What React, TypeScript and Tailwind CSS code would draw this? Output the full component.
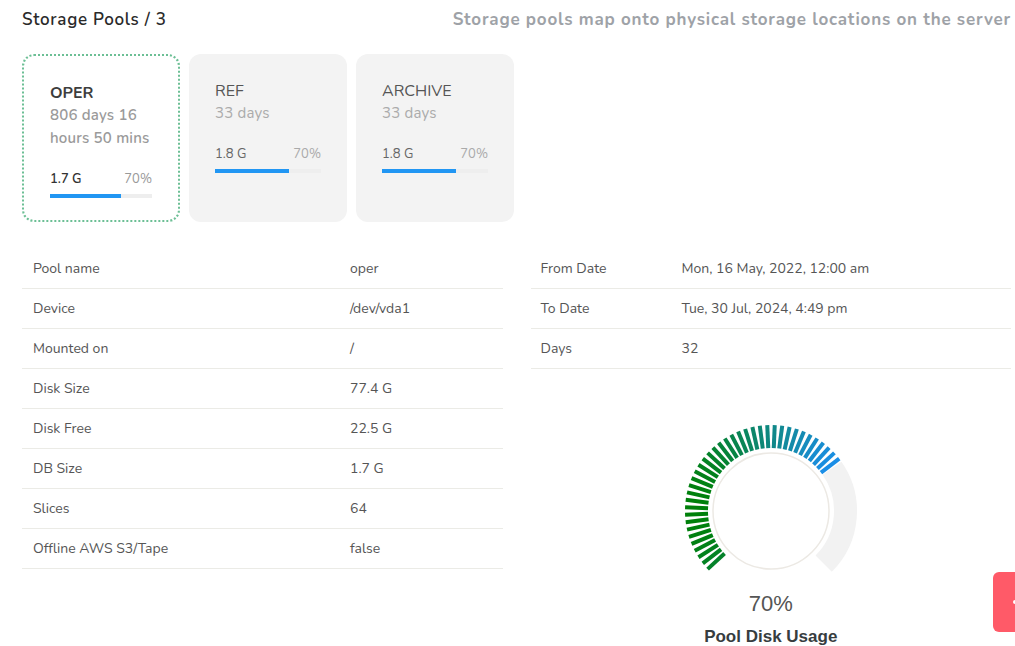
import React from 'react';

const FONT = "font-['Nunito','Lato','Noto_Sans',sans-serif]";

const pools = [
  { name: 'OPER', age: '806 days 16 hours 50 mins', size: '1.7 G', pct: 70, active: true },
  { name: 'REF', age: '33 days', size: '1.8 G', pct: 70, active: false },
  { name: 'ARCHIVE', age: '33 days', size: '1.8 G', pct: 70, active: false },
];

const details = [
  ['Pool name', 'oper'],
  ['Device', '/dev/vda1'],
  ['Mounted on', '/'],
  ['Disk Size', '77.4 G'],
  ['Disk Free', '22.5 G'],
  ['DB Size', '1.7 G'],
  ['Slices', '64'],
  ['Offline AWS S3/Tape', 'false'],
];

const dates = [
  ['From Date', 'Mon, 16 May, 2022, 12:00 am'],
  ['To Date', 'Tue, 30 Jul, 2024, 4:49 pm'],
  ['Days', '32'],
];

function PoolCard({ pool }: { pool: (typeof pools)[number] }) {
  return (
    <div
      className={`w-[158px] h-[168px] rounded-xl p-[26px] ${
        pool.active ? 'border-2 border-dotted border-[#6cbf95] bg-white' : 'bg-[#f3f3f3]'
      }`}
    >
      <div className={`text-[16px] leading-[22px] ${pool.active ? 'font-bold text-[#3d3d3d]' : 'text-[#555]'}`}>
        {pool.name}
      </div>
      <div
        className={`text-[15px] leading-[23px] tracking-[0.2px] ${
          pool.active ? 'font-semibold text-[#9a9a9a]' : 'text-[#ababab]'
        }`}
      >
        {pool.age}
      </div>
      <div className="mt-[20px] flex justify-between text-[13px] leading-[18px]">
        <span className={pool.active ? 'font-semibold text-[#333]' : 'text-[#666]'}>{pool.size}</span>
        <span className={pool.active ? 'text-[#999]' : 'text-[#aaa]'}>{pool.pct}%</span>
      </div>
      <div className="mt-[6px] h-[4px] bg-[#eeeeee]">
        <div className="h-full bg-[#2196f3]" style={{ width: `${pool.pct}%` }} />
      </div>
    </div>
  );
}

function InfoTable({ rows, labelWidth, padX }: { rows: string[][]; labelWidth: string; padX: string }) {
  return (
    <div>
      {rows.map(([k, v]) => (
        <div key={k} className={`flex h-10 items-center border-b border-[#ebebe6] ${padX} text-[14px] text-[#555]`}>
          <div className={labelWidth}>{k}</div>
          <div>{v}</div>
        </div>
      ))}
    </div>
  );
}

function Gauge({ pct }: { pct: number }) {
  const cx = 100;
  const cy = 100;
  const start = -135;
  const end = start + (270 * pct) / 100;
  const step = 5;
  const ticks: React.ReactNode[] = [];
  const mix = (a: number, b: number, t: number) => Math.round(a + (b - a) * t);
  for (let a = start + 2.5; a <= end; a += step) {
    const rad = (a * Math.PI) / 180;
    const s = Math.sin(rad);
    const c = -Math.cos(rad);
    const t = (s + 1) / 2;
    const col = `rgb(${mix(0, 30, t)},${mix(128, 144, t)},${mix(10, 255, t)})`;
    ticks.push(
      <line
        key={a}
        x1={cx + 63 * s}
        y1={cy + 63 * c}
        x2={cx + 86 * s}
        y2={cy + 86 * c}
        stroke={col}
        strokeWidth={4}
      />
    );
  }
  const pt = (deg: number, r: number) => {
    const rad = (deg * Math.PI) / 180;
    return `${cx + r * Math.sin(rad)} ${cy - r * Math.cos(rad)}`;
  };
  const trackR = 74.5;
  return (
    <svg width="200" height="180" viewBox="0 0 200 180">
      <path
        d={`M ${pt(end + 1, trackR)} A ${trackR} ${trackR} 0 0 1 ${pt(135, trackR)}`}
        fill="none"
        stroke="#f2f2f2"
        strokeWidth={23}
      />
      {ticks}
      <circle cx={cx} cy={cy} r={58} fill="#fff" stroke="#ece9e4" strokeWidth={1.5} />
    </svg>
  );
}

export default function App() {
  return (
    <div className={`relative h-screen overflow-hidden bg-white pl-[22px] pr-[4px] pt-[8px] ${FONT}`}>
      <div className="flex items-center justify-between h-6">
        <h1 className="text-[17px] font-semibold tracking-[0.7px] text-[#2a2a2a]">Storage Pools / 3</h1>
        <p className="text-[17px] font-bold tracking-[0.8px] text-[#9ea2a7]">
          Storage pools map onto physical storage locations on the server
        </p>
      </div>

      <div className="mt-[22px] flex gap-[9px]">
        {pools.map(p => (
          <PoolCard key={p.name} pool={p} />
        ))}
      </div>

      <div className="mt-[27px] grid grid-cols-2 gap-7">
        <InfoTable rows={details} labelWidth="w-[317px]" padX="px-[11px]" />
        <div className="flex flex-col">
          <InfoTable rows={dates} labelWidth="w-[141px]" padX="px-[10px]" />
          <div className="mt-[42px] flex flex-col items-center">
            <Gauge pct={70} />
            <div className="font-['Liberation_Sans',Arial,sans-serif] text-[22px] leading-[26px] text-[#555]">70%</div>
            <div className="mt-[9px] font-['Liberation_Sans',Arial,sans-serif] text-[17px] font-bold leading-[22px] text-[#373d3f]">
              Pool Disk Usage
            </div>
          </div>
        </div>
      </div>

      <div className="fixed left-[993px] top-[572px] flex h-[60px] w-[40px] items-center rounded-md bg-[#ff5a68] pl-[20px]">
        <span className="h-[4px] w-[4px] rounded-full bg-white" />
      </div>
    </div>
  );
}
